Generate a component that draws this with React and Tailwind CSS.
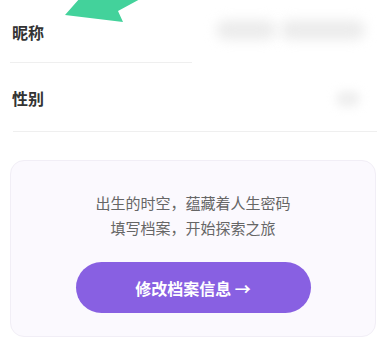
import React from "react";

export default function App() {
  return (
    <div
      className="relative w-[377px] h-[360px] overflow-hidden bg-white"
      style={{ fontFamily: '"Noto Sans CJK SC", "Noto Sans", sans-serif' }}
    >
      <svg className="absolute left-0 top-0 z-10" width="377" height="30" viewBox="0 0 377 30">
        <polygon points="65,15 80,-2 142,-2 118,11 123,22" fill="#43d29b" />
      </svg>

      <div className="flex flex-col">
        <div className="relative flex h-[63px] items-center pl-[12px]">
          <span className="text-[16px] font-bold text-[#333]">昵称</span>
          <div className="absolute left-[216px] top-[20px] h-[20px] w-[60px] rounded-full bg-[#ececec] blur-[6px]" />
          <div className="absolute left-[280px] top-[20px] h-[20px] w-[85px] rounded-full bg-[#ececec] blur-[6px]" />
          <div className="absolute bottom-0 left-[10px] h-px w-[182px] bg-[#efefef]" />
        </div>
        <div className="relative flex h-[69px] items-center pl-[12px]">
          <span className="text-[16px] font-bold text-[#333]">性别</span>
          <div className="absolute left-[336px] top-[28px] h-[16px] w-[24px] rounded-full bg-[#efefef] blur-[5px]" />
          <div className="absolute right-0 bottom-0 left-[13px] h-px bg-[#efefef]" />
        </div>
      </div>

      <div className="ml-[10px] mr-[1px] mt-[28px] flex h-[177px] flex-col items-center rounded-[14px] border border-[#f1eef6] bg-[#fbf9fe] pt-[29px]">
        <p className="text-[15px] leading-[25px] text-[#666]">出生的时空，蕴藏着人生密码</p>
        <p className="text-[15px] leading-[25px] text-[#666]">填写档案，开始探索之旅</p>
        <button className="mt-[22px] flex h-[51px] w-[235px] items-center justify-center rounded-full bg-[#8860e2] text-[16px] font-bold text-white">
          修改档案信息 →
        </button>
      </div>
    </div>
  );
}
